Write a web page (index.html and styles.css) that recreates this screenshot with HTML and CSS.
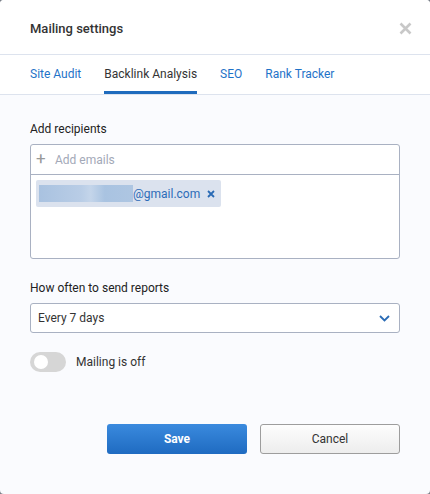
FILE: index.html
```html
<!DOCTYPE html>
<html lang="en">
<head>
    <meta charset="UTF-8">
    <meta name="viewport" content="width=device-width, initial-scale=1.0">
    <title>Mailing settings</title>
    <link rel="stylesheet" href="styles.css">
</head>
<body>
    <div class="modal">
        <div class="modal-header">
            <h1 class="modal-title">Mailing settings</h1>
            <button class="close-button" type="button" aria-label="Close">
                <svg width="13" height="13" viewBox="0 0 13 13">
                    <path d="M1.5 1.5 L11.5 11.5 M11.5 1.5 L1.5 11.5" stroke="#c8c8c8" stroke-width="2.6" stroke-linecap="butt"/>
                </svg>
            </button>
        </div>
        <div class="tabs">
            <a class="tab">Site Audit</a>
            <a class="tab tab-active">Backlink Analysis</a>
            <a class="tab">SEO</a>
            <a class="tab">Rank Tracker</a>
        </div>
        <div class="modal-body">
            <div class="field field-recipients">
                <div class="field-label">Add recipients</div>
                <div class="recipients">
                    <div class="recipients-input">
                        <span class="plus">+</span>
                        <span class="placeholder">Add emails</span>
                    </div>
                    <div class="recipients-list">
                        <span class="chip">
                            <span class="chip-blur"></span>
                            <span class="chip-text">@gmail.com</span>
                            <svg class="chip-remove" width="8" height="8" viewBox="0 0 8 8">
                                <path d="M1 1 L7 7 M7 1 L1 7" stroke="#2a6bb5" stroke-width="1.8"/>
                            </svg>
                        </span>
                    </div>
                </div>
            </div>
            <div class="field">
                <div class="field-label">How often to send reports</div>
                <div class="select">
                    <span>Every 7 days</span>
                    <svg width="11" height="7" viewBox="0 0 11 7">
                        <path d="M1 1 L5.5 5.5 L10 1" fill="none" stroke="#2a6bb5" stroke-width="1.8"/>
                    </svg>
                </div>
            </div>
            <div class="switch-row">
                <span class="switch"><span class="switch-knob"></span></span>
                <span class="switch-label">Mailing is off</span>
            </div>
            <div class="actions">
                <button class="btn btn-primary" type="button">Save</button>
                <button class="btn btn-default" type="button">Cancel</button>
            </div>
        </div>
    </div>
</body>
</html>
```

FILE: styles.css
```css
body {
    margin: 0;
    font-family: Roboto, "Liberation Sans", Arial, sans-serif;
    background-color: #7a7f88;
}
.modal {
    width: 430px;
    height: 494px;
    background-color: #fafbfe;
    border-radius: 4px;
    overflow: hidden;
    display: flex;
    flex-direction: column;
}
.modal-header {
    height: 54px;
    background-color: white;
    border-bottom: 1px solid #dde3ee;
    display: flex;
    align-items: center;
    justify-content: space-between;
    padding: 0 18px 0 30px;
}
.modal-title {
    margin: 0;
    font-size: 13px;
    font-weight: 500;
    color: #333;
    padding-top: 2px;
}
.close-button {
    border: none;
    background: none;
    padding: 0;
    display: flex;
    cursor: pointer;
    margin-top: 2px;
}
.tabs {
    height: 39px;
    background-color: white;
    border-bottom: 1px solid #dde3ee;
    display: flex;
    gap: 23px;
    padding: 0 30px;
}
.tab {
    font-size: 12px;
    color: #1f73c8;
    display: flex;
    align-items: center;
    padding-top: 2px;
    border-bottom: 3px solid transparent;
    cursor: pointer;
}
.tab-active {
    color: #333;
    border-bottom-color: #1f6bbd;
}
.modal-body {
    padding: 26px 30px 0;
    display: flex;
    flex-direction: column;
}
.field {
    display: flex;
    flex-direction: column;
    gap: 7px;
    margin-bottom: 19px;
}
.field-recipients {
    margin-bottom: 21px;
}
.field-label {
    font-size: 12px;
    color: #222;
    line-height: 16px;
}
.recipients {
    border: 1px solid #a9b1c2;
    border-radius: 3px;
    background-color: white;
    height: 113px;
}
.recipients-input {
    height: 29px;
    border-bottom: 1px solid #a9b1c2;
    display: flex;
    align-items: center;
    padding: 0 5px;
    font-size: 12px;
}
.plus {
    color: #999;
    font-size: 17px;
    width: 19px;
    line-height: 1;
    margin-top: -2px;
}
.placeholder {
    color: #a3a9b8;
}
.recipients-list {
    padding: 5px 5px;
    display: flex;
}
.chip {
    display: flex;
    align-items: center;
    height: 27px;
    padding: 0 6px 0 3px;
    background-color: #dbe2ee;
    border-radius: 2px;
    font-size: 12px;
    color: #2d6cb8;
}
.chip-blur {
    width: 94px;
    height: 17px;
    background: linear-gradient(90deg, #a9c2e0 0%, #b9cde6 45%, #c4d5ea 55%, #a9c3e1 70%, #aec6e2 100%);
    filter: blur(0.6px);
}
.chip-text {
    margin-right: 7px;
}
.chip-remove {
    display: block;
}
.select {
    height: 28px;
    border: 1px solid #a9b1c2;
    border-radius: 3px;
    background-color: white;
    display: flex;
    align-items: center;
    justify-content: space-between;
    padding: 0 9px 0 7px;
    font-size: 12px;
    color: #333;
}
.switch-row {
    display: flex;
    align-items: center;
    gap: 10px;
}
.switch {
    width: 36px;
    height: 20px;
    border-radius: 10px;
    background-color: #d6d6d6;
    display: flex;
    align-items: center;
    padding: 0 4px;
    box-sizing: border-box;
}
.switch-knob {
    width: 14px;
    height: 14px;
    border-radius: 50%;
    background-color: white;
}
.switch-label {
    font-size: 12px;
    color: #333;
}
.actions {
    display: flex;
    justify-content: flex-end;
    gap: 13px;
    margin-top: 52px;
}
.btn {
    width: 140px;
    height: 30px;
    border-radius: 3px;
    font-family: inherit;
    font-size: 12px;
    cursor: pointer;
}
.btn-primary {
    border: none;
    color: white;
    font-weight: 700;
    background: linear-gradient(#3a8ade, #1f6bc1);
}
.btn-default {
    border: 1px solid #9d9d9d;
    color: #333;
    background: linear-gradient(#fdfdfd, #ededed);
}
```
